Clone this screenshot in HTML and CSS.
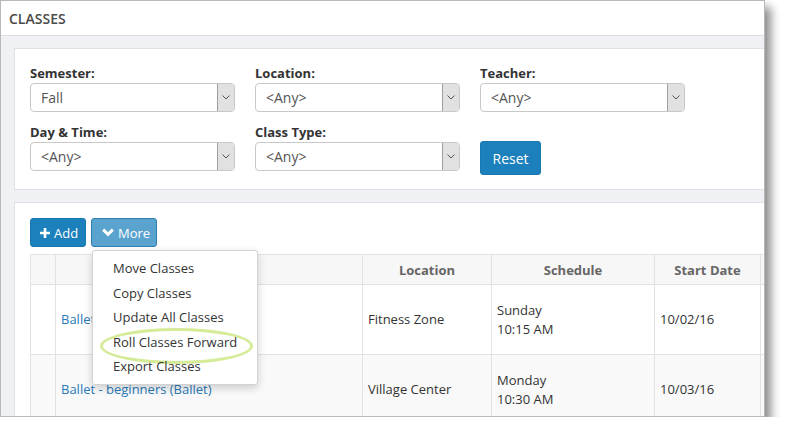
FILE: index.html
```html
<!DOCTYPE html>
<html lang="en">
<head>
    <meta charset="UTF-8">
    <title>Classes</title>
    <link rel="stylesheet" href="styles.css">
</head>
<body>

    <div class="window">
        <!-- Page Title -->
        <div class="page-title">CLASSES</div>

        <div class="page-body">

            <!-- Filters -->
            <div class="panel filters">
                <div class="filter-grid">
                    <div class="field">
                        <label>Semester:</label>
                        <div class="select"><span class="select-value">Fall</span><span class="select-arrow"><svg width="8" height="5" viewBox="0 0 8 5"><path d="M0.5 0.5 L4 4 L7.5 0.5" fill="none" stroke="#555" stroke-width="1"/></svg></span></div>
                    </div>
                    <div class="field">
                        <label>Location:</label>
                        <div class="select"><span class="select-value">&lt;Any&gt;</span><span class="select-arrow"><svg width="8" height="5" viewBox="0 0 8 5"><path d="M0.5 0.5 L4 4 L7.5 0.5" fill="none" stroke="#555" stroke-width="1"/></svg></span></div>
                    </div>
                    <div class="field">
                        <label>Teacher:</label>
                        <div class="select"><span class="select-value">&lt;Any&gt;</span><span class="select-arrow"><svg width="8" height="5" viewBox="0 0 8 5"><path d="M0.5 0.5 L4 4 L7.5 0.5" fill="none" stroke="#555" stroke-width="1"/></svg></span></div>
                    </div>
                    <div class="field">
                        <label>Day &amp; Time:</label>
                        <div class="select"><span class="select-value">&lt;Any&gt;</span><span class="select-arrow"><svg width="8" height="5" viewBox="0 0 8 5"><path d="M0.5 0.5 L4 4 L7.5 0.5" fill="none" stroke="#555" stroke-width="1"/></svg></span></div>
                    </div>
                    <div class="field">
                        <label>Class Type:</label>
                        <div class="select"><span class="select-value">&lt;Any&gt;</span><span class="select-arrow"><svg width="8" height="5" viewBox="0 0 8 5"><path d="M0.5 0.5 L4 4 L7.5 0.5" fill="none" stroke="#555" stroke-width="1"/></svg></span></div>
                    </div>
                    <div class="field field-button">
                        <button class="btn btn-primary btn-reset">Reset</button>
                    </div>
                </div>
            </div>

            <!-- Class List -->
            <div class="panel list">
                <div class="toolbar">
                    <button class="btn btn-primary">
                        <svg width="10" height="10" viewBox="0 0 10 10"><path d="M3.7 0 H6.3 V3.7 H10 V6.3 H6.3 V10 H3.7 V6.3 H0 V3.7 H3.7 Z" fill="#fff"/></svg>
                        Add
                    </button>
                    <div class="more-wrap">
                        <button class="btn btn-light">
                            <svg class="chevron" width="12" height="9" viewBox="0 0 12 9"><path d="M1.2 1.6 L6 6.4 L10.8 1.6" fill="none" stroke="#fff" stroke-width="3"/></svg>
                            More
                        </button>

                        <!-- Dropdown Menu -->
                        <ul class="dropdown">
                            <li>Move Classes</li>
                            <li>Copy Classes</li>
                            <li>Update All Classes</li>
                            <li class="highlight">Roll Classes Forward</li>
                            <li>Export Classes</li>
                        </ul>
                    </div>
                </div>

                <table class="classes">
                    <colgroup>
                        <col style="width: 25px">
                        <col style="width: 307px">
                        <col style="width: 129px">
                        <col style="width: 163px">
                        <col style="width: 106px">
                        <col style="width: 100px">
                    </colgroup>
                    <thead>
                        <tr>
                            <th></th>
                            <th></th>
                            <th>Location</th>
                            <th>Schedule</th>
                            <th>Start Date</th>
                            <th></th>
                        </tr>
                    </thead>
                    <tbody>
                        <tr>
                            <td></td>
                            <td><a href="#">Ballet - beginners (Ballet)</a></td>
                            <td>Fitness Zone</td>
                            <td>Sunday<br>10:15 AM</td>
                            <td>10/02/16</td>
                            <td></td>
                        </tr>
                        <tr class="striped">
                            <td></td>
                            <td><a href="#">Ballet - beginners (Ballet)</a></td>
                            <td>Village Center</td>
                            <td>Monday<br>10:30 AM</td>
                            <td>10/03/16</td>
                            <td></td>
                        </tr>
                    </tbody>
                </table>
            </div>

        </div>
    </div>

</body>
</html>
```

FILE: styles.css
```css
/* Reset */
* {
    margin: 0;
    padding: 0;
    box-sizing: border-box;
}

body {
    font-family: "Open Sans", Arial, sans-serif;
    font-size: 13px;
    color: #333;
    background-color: #fff;
}

/* Screenshot frame */
.window {
    width: 765px;
    height: 417px;
    border: 1px solid #b8b8b8;
    background-color: #f0f1f5;
    box-shadow: 6px 7px 9px rgba(0, 0, 0, 0.45);
    overflow: hidden;
}

.page-title {
    height: 35px;
    padding: 8px 0 0 8px;
    font-size: 14px;
    font-weight: 600;
    color: #4a4a4a;
    background-color: #fff;
    border-bottom: 1px solid #dcdde3;
}

.page-body {
    padding: 12px 0 0 13px;
    width: 900px;
}

.panel {
    background-color: #fff;
    border: 1px solid #e0e1e5;
}

/* Filters */
.filters {
    padding: 15px 15px 14px 15px;
}

.filter-grid {
    display: grid;
    grid-template-columns: 205px 205px 205px;
    column-gap: 20px;
    row-gap: 11px;
}

.field label {
    display: block;
    font-weight: 700;
    font-size: 13px;
    line-height: 18px;
    margin-bottom: 1px;
    color: #333;
}

.select {
    display: flex;
    height: 29px;
    border: 1px solid #c8c8c8;
    border-radius: 4px;
    overflow: hidden;
}

.select-value {
    flex: 1;
    padding-left: 10px;
    font-size: 14px;
    line-height: 27px;
    color: #555;
}

.select-arrow {
    width: 17px;
    display: flex;
    align-items: center;
    justify-content: center;
    background-color: #e1e1e1;
    border-left: 1px solid #9e9e9e;
}

.field-button {
    padding-top: 18px;
}

/* Buttons */
.btn {
    display: inline-flex;
    align-items: center;
    gap: 4px;
    height: 29px;
    padding: 0 10px;
    font-family: "Open Sans", Arial, sans-serif;
    font-size: 13px;
    color: #fff;
    border-radius: 3px;
    cursor: pointer;
}

.btn-primary {
    background-color: #1b80bb;
    border: 1px solid #1a78b0;
}

.btn-light {
    background-color: #5ba3cf;
    border: 1px solid #2e7fb4;
    padding: 0 9px 0 10px;
}

.btn .chevron {
    flex-shrink: 0;
}

.btn-reset {
    height: 34px;
    width: 61px;
    justify-content: center;
    font-size: 14px;
}

/* Class list */
.list {
    margin-top: 12px;
    padding: 15px 15px 0 15px;
    height: 300px;
}

.toolbar {
    display: flex;
    gap: 5px;
    margin-bottom: 7px;
}

.toolbar .btn-primary {
    width: 56px;
    padding: 0 0 0 9px;
}

.toolbar .btn-light {
    width: 66px;
}

.more-wrap {
    position: relative;
}

.dropdown {
    position: absolute;
    top: 32px;
    left: 1px;
    width: 166px;
    padding: 5px 0;
    list-style: none;
    background-color: #fff;
    border: 1px solid #d3d3d3;
    border-radius: 3px;
    box-shadow: 0 3px 8px rgba(0, 0, 0, 0.18);
    z-index: 10;
}

.dropdown li {
    padding-left: 20px;
    font-size: 13px;
    line-height: 24.5px;
    color: #333;
    position: relative;
}

.dropdown li.highlight::after {
    content: "";
    position: absolute;
    left: 7px;
    top: -2px;
    width: 147px;
    height: 30px;
    border: 3px solid #d4ec98;
    border-radius: 50%;
}

/* Table */
.classes {
    border-collapse: collapse;
    table-layout: fixed;
    width: 830px;
}

.classes th,
.classes td {
    border: 1px solid #e2e2e2;
    padding: 0 5px;
    vertical-align: middle;
    text-align: left;
}

.classes th {
    height: 30px;
    background-color: #f7f7f7;
    font-weight: 700;
    color: #666;
    text-align: center;
}

.classes td {
    height: 70px;
    line-height: 19px;
    color: #333;
}

.classes tr.striped td {
    background-color: #f9f9f9;
}

.classes a {
    color: #2a7ab9;
    text-decoration: none;
}
```
